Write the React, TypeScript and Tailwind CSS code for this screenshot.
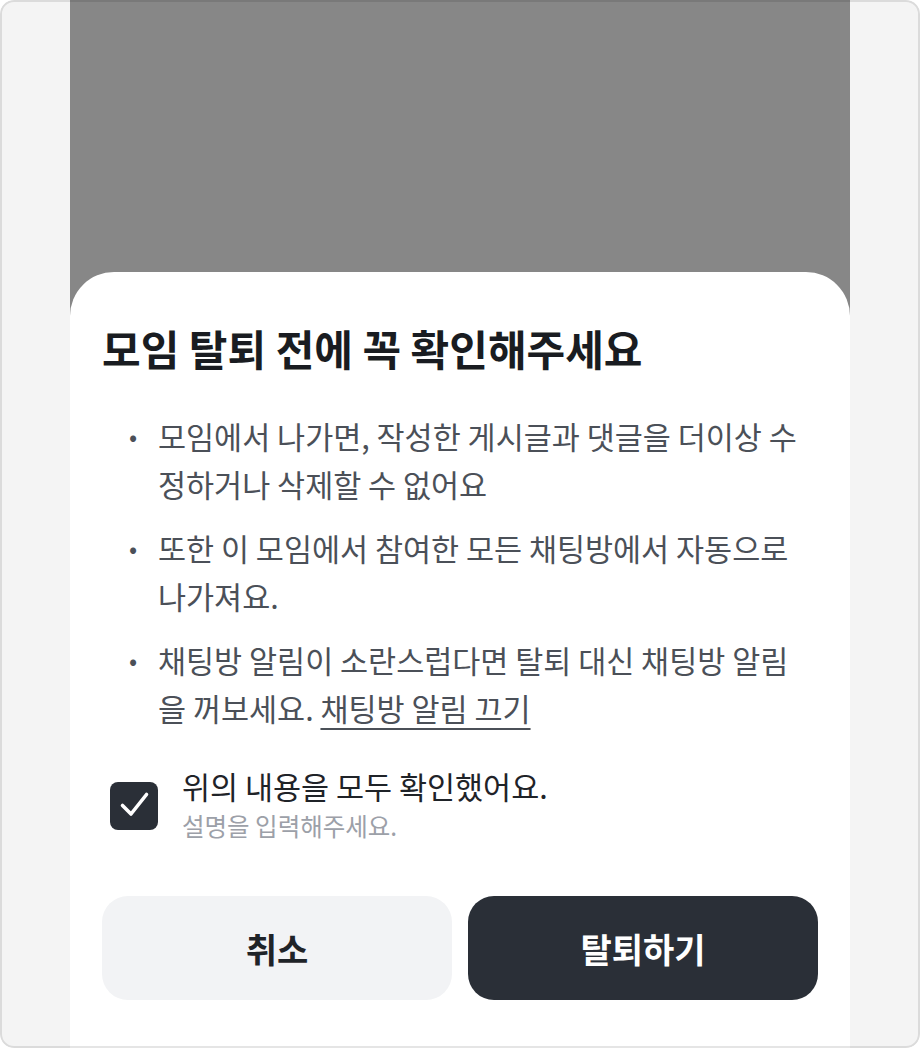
import { useState } from 'react'

const notices = [
  { text: '모임에서 나가면, 작성한 게시글과 댓글을 더이상 수정하거나 삭제할 수 없어요' },
  { text: '또한 이 모임에서 참여한 모든 채팅방에서 자동으로 나가져요.' },
  { text: '채팅방 알림이 소란스럽다면 탈퇴 대신 채팅방 알림을 꺼보세요. ', link: '채팅방 알림 끄기' },
]

function NoticeList() {
  return (
    <ul className="mt-10 flex flex-col gap-4 pr-3">
      {notices.map((item) => (
        <li key={item.text} className="flex text-[30.5px] leading-[48px] text-[#4b5058]">
          <span className="w-[56px] shrink-0 pl-[27px] text-[24px]">•</span>
          <span>
            {item.text}
            {item.link && (
              <a href="#" className="underline decoration-[1.5px] underline-offset-[7px]">
                {item.link}
              </a>
            )}
          </span>
        </li>
      ))}
    </ul>
  )
}

function CheckMark() {
  return (
    <svg viewBox="0 0 48 48" className="h-12 w-12" fill="none">
      <path
        d="M12.5 23.5 L21 32 L36.5 12.5"
        stroke="white"
        strokeWidth={3.6}
        strokeLinecap="round"
        strokeLinejoin="round"
      />
    </svg>
  )
}

function ConfirmCheck() {
  const [checked, setChecked] = useState(true)

  return (
    <label className="mt-[34px] flex cursor-pointer items-center gap-6 pl-2">
      <button
        type="button"
        onClick={() => setChecked((v) => !v)}
        className={`flex h-12 w-12 shrink-0 items-center justify-center rounded-lg ${
          checked ? 'bg-[#2a2f37]' : 'border-2 border-[#d1d5db] bg-white'
        }`}
        aria-pressed={checked}
      >
        {checked && <CheckMark />}
      </button>
      <div className="flex flex-col">
        <span className="text-[30.5px] leading-[40px] text-[#1f2328]">위의 내용을 모두 확인했어요.</span>
        <span className="text-[24.5px] leading-[40px] text-[#9ca0a8]">설명을 입력해주세요.</span>
      </div>
    </label>
  )
}

export default function App() {
  return (
    <div className="relative h-[1048px] w-[920px] overflow-hidden rounded-[14px] bg-[#f4f4f4] font-['Noto_Sans_CJK_KR','Noto_Sans',sans-serif]">
      <div className="mx-auto flex h-full w-[780px] flex-col bg-[#878787]">
        <div className="h-[272px] shrink-0" />
        <section className="flex flex-1 flex-col rounded-t-[44px] bg-white px-8 pt-[52px]">
          <h2 className="text-[42px] font-bold leading-[48px] text-[#191c21]">모임 탈퇴 전에 꼭 확인해주세요</h2>
          <NoticeList />
          <ConfirmCheck />
          <div className="mt-[50px] grid grid-cols-2 gap-4">
            <button className="h-[104px] rounded-[26px] bg-[#f2f3f5] text-[34px] font-bold text-[#1f2328]">취소</button>
            <button className="h-[104px] rounded-[26px] bg-[#2a2f37] text-[34px] font-bold text-white">탈퇴하기</button>
          </div>
        </section>
      </div>
      <div className="pointer-events-none absolute inset-0 rounded-[14px] border-2 border-black/10" />
    </div>
  )
}
